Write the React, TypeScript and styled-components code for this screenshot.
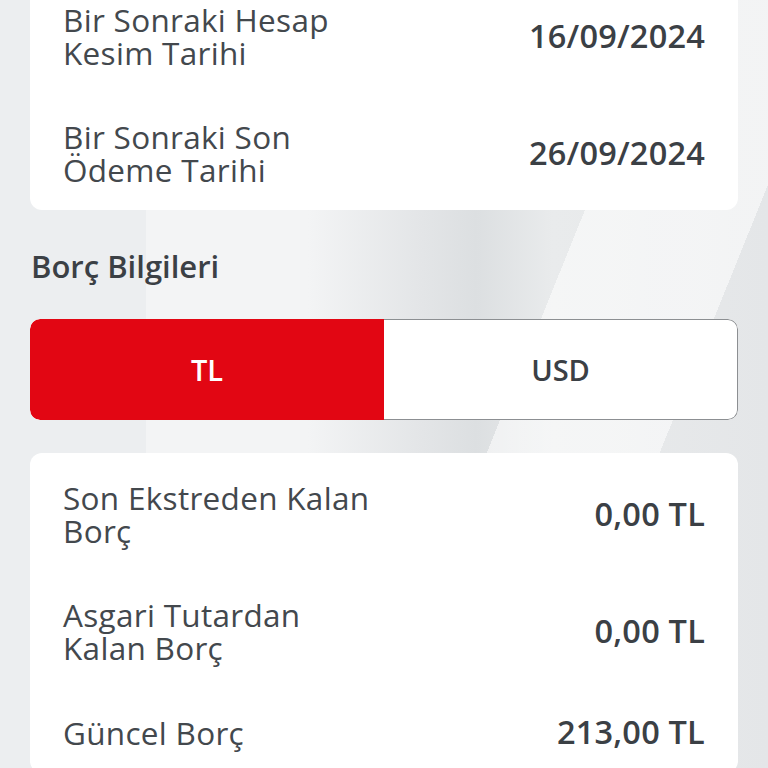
import React from "react";
import styled, { createGlobalStyle } from "styled-components";

const GlobalStyle = createGlobalStyle`
  html, body {
    margin: 0;
    padding: 0;
    height: 100%;
    overflow: hidden;
  }
  body {
    font-family: "Open Sans", "Noto Sans", "Liberation Sans", sans-serif;
    background: #e8e9eb;
  }
`;

const Page = styled.div`
  min-height: 768px;
  padding: 0 30px;
  box-sizing: border-box;
  background:
    linear-gradient(112deg, transparent 0 62%, rgba(255, 255, 255, 0.55) 62% 78%, transparent 78%),
    linear-gradient(90deg, #eceef0 0 19%, #f3f4f5 19% 40%, #e3e5e7 55%, #dcdfe1 62%, #e9ebec 72%, #e4e6e8 100%);
  display: flex;
  flex-direction: column;
`;

const Card = styled.section<{ $top?: number }>`
  background: #fff;
  border-radius: 12px;
  padding: 28px 33px 24px;
  margin-top: ${(p) => p.$top ?? 0}px;
  display: flex;
  flex-direction: column;
  gap: 51px;
`;

const Row = styled.div`
  display: flex;
  align-items: center;
  justify-content: space-between;
  gap: 24px;
`;

const Label = styled.span`
  font-size: 31.5px;
  line-height: 33px;
  font-weight: 400;
  letter-spacing: 0.3px;
  color: #43484d;
  max-width: 318px;
`;

const Value = styled.span`
  font-size: 32.5px;
  line-height: 34px;
  font-weight: 600;
  letter-spacing: 0.2px;
  color: #3b4045;
  white-space: nowrap;
`;

const Heading = styled.h2`
  margin: 39px 0 0 1px;
  font-size: 31px;
  line-height: 34px;
  font-weight: 600;
  color: #3b4045;
`;

const Toggle = styled.div`
  margin-top: 36px;
  height: 101px;
  display: grid;
  grid-template-columns: 1fr 1fr;
  border-radius: 10px;
  overflow: hidden;
  background: #fff;
`;

const ToggleOption = styled.button<{ $active?: boolean }>`
  font-family: inherit;
  font-size: 29px;
  font-weight: 600;
  border: ${(p) => (p.$active ? "none" : "1.5px solid #8c8f92")};
  border-left: none;
  border-radius: ${(p) => (p.$active ? "10px 0 0 10px" : "0 10px 10px 0")};
  background: ${(p) => (p.$active ? "#e20613" : "#fff")};
  color: ${(p) => (p.$active ? "#fff" : "#3b4045")};
  padding: 0;
`;

const firstCard = [
  { label: "Bir Sonraki Hesap Kesim Tarihi", value: "16/09/2024" },
  { label: "Bir Sonraki Son Ödeme Tarihi", value: "26/09/2024" },
];

const debtCard = [
  { label: "Son Ekstreden Kalan Borç", value: "0,00 TL" },
  { label: "Asgari Tutardan Kalan Borç", value: "0,00 TL" },
  { label: "Güncel Borç", value: "213,00 TL" },
];

const App = () => {
  return (
    <>
      <GlobalStyle />
      <Page>
        <Card $top={-25}>
          {firstCard.map((r) => (
            <Row key={r.label}>
              <Label>{r.label}</Label>
              <Value>{r.value}</Value>
            </Row>
          ))}
        </Card>
        <Heading>Borç Bilgileri</Heading>
        <Toggle>
          <ToggleOption $active>TL</ToggleOption>
          <ToggleOption>USD</ToggleOption>
        </Toggle>
        <Card $top={33}>
          {debtCard.map((r) => (
            <Row key={r.label}>
              <Label>{r.label}</Label>
              <Value>{r.value}</Value>
            </Row>
          ))}
        </Card>
      </Page>
    </>
  );
};

export default App;
